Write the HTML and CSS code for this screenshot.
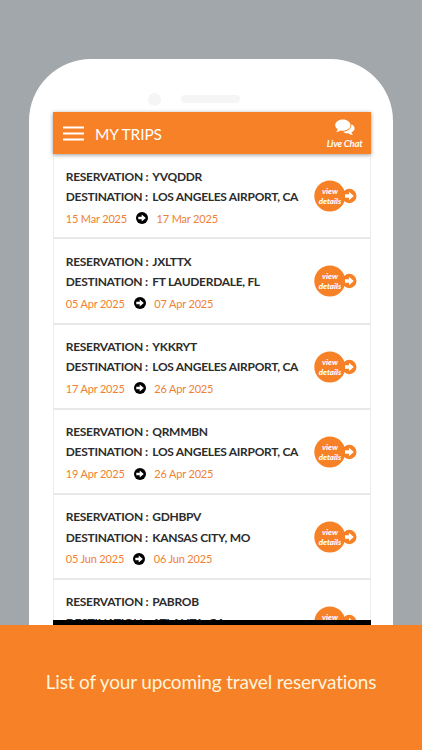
FILE: index.html
```html
<!DOCTYPE html>
<html lang="en">
<head>
<meta charset="utf-8">
<title>My Trips</title>
<link rel="stylesheet" href="styles.css">
</head>
<body>
<svg class="defs" aria-hidden="true">
  <symbol id="arrow" viewBox="0 0 12 12"><path d="M2.300 4.700h3.400V2.500L9.800 6 5.700 9.500V7.300H2.300z"/></symbol>
  <symbol id="details" viewBox="0 0 44 32">
    <circle cx="35.3" cy="16" r="7.2"/><circle cx="15.8" cy="16" r="15.5"/>
    <path fill="#fff" d="M31 14.300h4v-2.500l4.800 4.200-4.800 4.200v-2.500h-4z"/>
  </symbol>
</svg>
<main class="stage">
  <section class="phone">
    <div class="speaker"><i class="camera"></i><i class="slot"></i></div>
    <div class="screen">
      <header class="bar">
        <svg class="menu" viewBox="0 0 21 15" fill="#fff"><path d="M0 .4h21v2.200H0zM0 6.400h21v2.200H0zM0 12.400h21v2.200H0z"/></svg>
        <h1>MY TRIPS</h1>
        <div class="chat">
          <svg width="20" height="17" viewBox="0 0 20 17" fill="#fff"><path d="M7.800.4C3.500.4.2 2.900.2 6.100c0 1.800 1 3.300 2.600 4.300-.3 1-.9 1.800-1.700 2.500 1.700 0 3.200-.5 4.400-1.400.7.1 1.500.2 2.300.2 4.300 0 7.700-2.400 7.700-5.600S12.100.4 7.800.4z"/><path d="M16.400 5.200c.3 4-3.200 7-8.200 7.500 1.200 1.100 3.200 1.700 5.200 1.500 1.300 1 2.900 1.500 4.800 1.500-.9-.6-1.500-1.300-1.800-2.300 1.900-.8 3.200-2.100 3.200-3.800 0-1.900-1.200-3.500-3.200-4.400z"/></svg>
          <span>Live Chat</span>
        </div>
      </header>
      <div class="trips">
        <article class="trip"><div class="info"><p><b>RESERVATION :</b><b>YVQDDR</b></p><p><b>DESTINATION :</b><b>LOS ANGELES AIRPORT, CA</b></p><div class="dates"><span>15 Mar 2025</span><i><svg><use href="#arrow"/></svg></i><span>17 Mar 2025</span></div></div><div class="view"><svg><use href="#details"/></svg><span>view<br>details</span></div></article>
        <article class="trip"><div class="info"><p><b>RESERVATION :</b><b>JXLTTX</b></p><p><b>DESTINATION :</b><b>FT LAUDERDALE, FL</b></p><div class="dates"><span>05 Apr 2025</span><i><svg><use href="#arrow"/></svg></i><span>07 Apr 2025</span></div></div><div class="view"><svg><use href="#details"/></svg><span>view<br>details</span></div></article>
        <article class="trip"><div class="info"><p><b>RESERVATION :</b><b>YKKRYT</b></p><p><b>DESTINATION :</b><b>LOS ANGELES AIRPORT, CA</b></p><div class="dates"><span>17 Apr 2025</span><i><svg><use href="#arrow"/></svg></i><span>26 Apr 2025</span></div></div><div class="view"><svg><use href="#details"/></svg><span>view<br>details</span></div></article>
        <article class="trip"><div class="info"><p><b>RESERVATION :</b><b>QRMMBN</b></p><p><b>DESTINATION :</b><b>LOS ANGELES AIRPORT, CA</b></p><div class="dates"><span>19 Apr 2025</span><i><svg><use href="#arrow"/></svg></i><span>26 Apr 2025</span></div></div><div class="view"><svg><use href="#details"/></svg><span>view<br>details</span></div></article>
        <article class="trip"><div class="info"><p><b>RESERVATION :</b><b>GDHBPV</b></p><p><b>DESTINATION :</b><b>KANSAS CITY, MO</b></p><div class="dates"><span>05 Jun 2025</span><i><svg><use href="#arrow"/></svg></i><span>06 Jun 2025</span></div></div><div class="view"><svg><use href="#details"/></svg><span>view<br>details</span></div></article>
        <article class="trip"><div class="info"><p><b>RESERVATION :</b><b>PABROB</b></p><p><b>DESTINATION :</b><b>ATLANTA, GA</b></p></div><div class="view"><svg><use href="#details"/></svg><span>view<br>details</span></div></article>
      </div>
      <div class="navbar"></div>
    </div>
  </section>
</main>
<footer class="caption">List of your upcoming travel reservations</footer>
</body>
</html>
```
FILE: styles.css
```css
* { box-sizing: border-box; }
body {
  margin: 0;
  height: 750px;
  overflow: hidden;
  display: flex;
  flex-direction: column;
  background: #a2a7ab;
  font-family: Lato, "Liberation Sans", sans-serif;
}
h1, p { margin: 0; }
.defs { display: none; }
.stage { height: 625px; padding: 58.5px 29.5px 0 29px; }
.phone {
  height: 566.5px;
  background: #fff;
  border-radius: 62px 62px 0 0;
  display: flex;
  flex-direction: column;
}
.speaker {
  height: 53.5px;
  padding: 34px 0 0 119px;
  display: flex;
  align-items: flex-start;
  gap: 20px;
}
.camera { width: 13px; height: 13px; border-radius: 50%; background: #f5f5f5; }
.slot { width: 59px; height: 8px; margin-top: 2.5px; border-radius: 4px; background: #f5f5f5; }
.screen {
  width: 318.4px;
  height: 513px;
  margin-left: 23.6px;
  display: flex;
  flex-direction: column;
}
.bar {
  flex: none;
  height: 42.4px;
  padding: 0 8.5px 0 10.4px;
  display: flex;
  align-items: center;
  background: #f68127;
  color: #fff;
  box-shadow: 0 1px 4px rgba(0, 0, 0, .4);
  position: relative;
  z-index: 1;
}
.menu { width: 21px; height: 15px; }
.bar h1 { margin-left: 11px; font-size: 15.5px; font-weight: 400; line-height: 20px; padding-top: 2px; letter-spacing: -.12px; }
.chat {
  margin-left: auto;
  padding-top: 2px;
  display: flex;
  flex-direction: column;
  align-items: center;
  font-size: 9.5px;
  font-style: italic;
  font-weight: 700;
  line-height: 12px;
  letter-spacing: -.2px;
}
.chat span { margin-top: 2px; }
.trips {
  height: 466.1px;
  overflow: hidden;
  border: solid #eee;
  border-width: 0 1px;
}
.trip {
  height: 85.1px;
  padding: 12.2px 11.5px 0 12.2px;
  display: flex;
  justify-content: space-between;
  border-bottom: 2px solid #e7e8e9;
}
.info p { display: grid; grid-template-columns: 86.5px auto; height: 20.6px; line-height: 20px; font-size: 12px; letter-spacing: -.3px; white-space: nowrap; color: #2c2c2c; }
.info b { font-weight: 700; }
.dates { display: flex; align-items: center; height: 21px; font-size: 11px; letter-spacing: -.18px; color: #f08132; }
.dates i { width: 12px; height: 12px; margin: 0 8.8px; border-radius: 50%; background: #000; display: flex; }
.dates svg { width: 12px; height: 12px; fill: #fff; }
.view { position: relative; width: 44px; height: 32px; margin-top: 13.8px; color: #fff; }
.view svg { display: block; width: 44px; height: 32px; fill: #f68127; }
.view span {
  position: absolute;
  left: 0;
  top: 6px;
  width: 31px;
  text-align: center;
  font-size: 8px;
  font-style: italic;
  font-weight: 900;
  line-height: 10px;
}
.navbar { height: 4.5px; background: #000; }
.caption {
  height: 125px;
  display: flex;
  justify-content: center;
  padding-top: 44px;
  background: #f68127;
  color: #fff4dc;
  font-size: 19px;
  letter-spacing: -.17px;
  line-height: 26px;
  white-space: nowrap;
}
```
